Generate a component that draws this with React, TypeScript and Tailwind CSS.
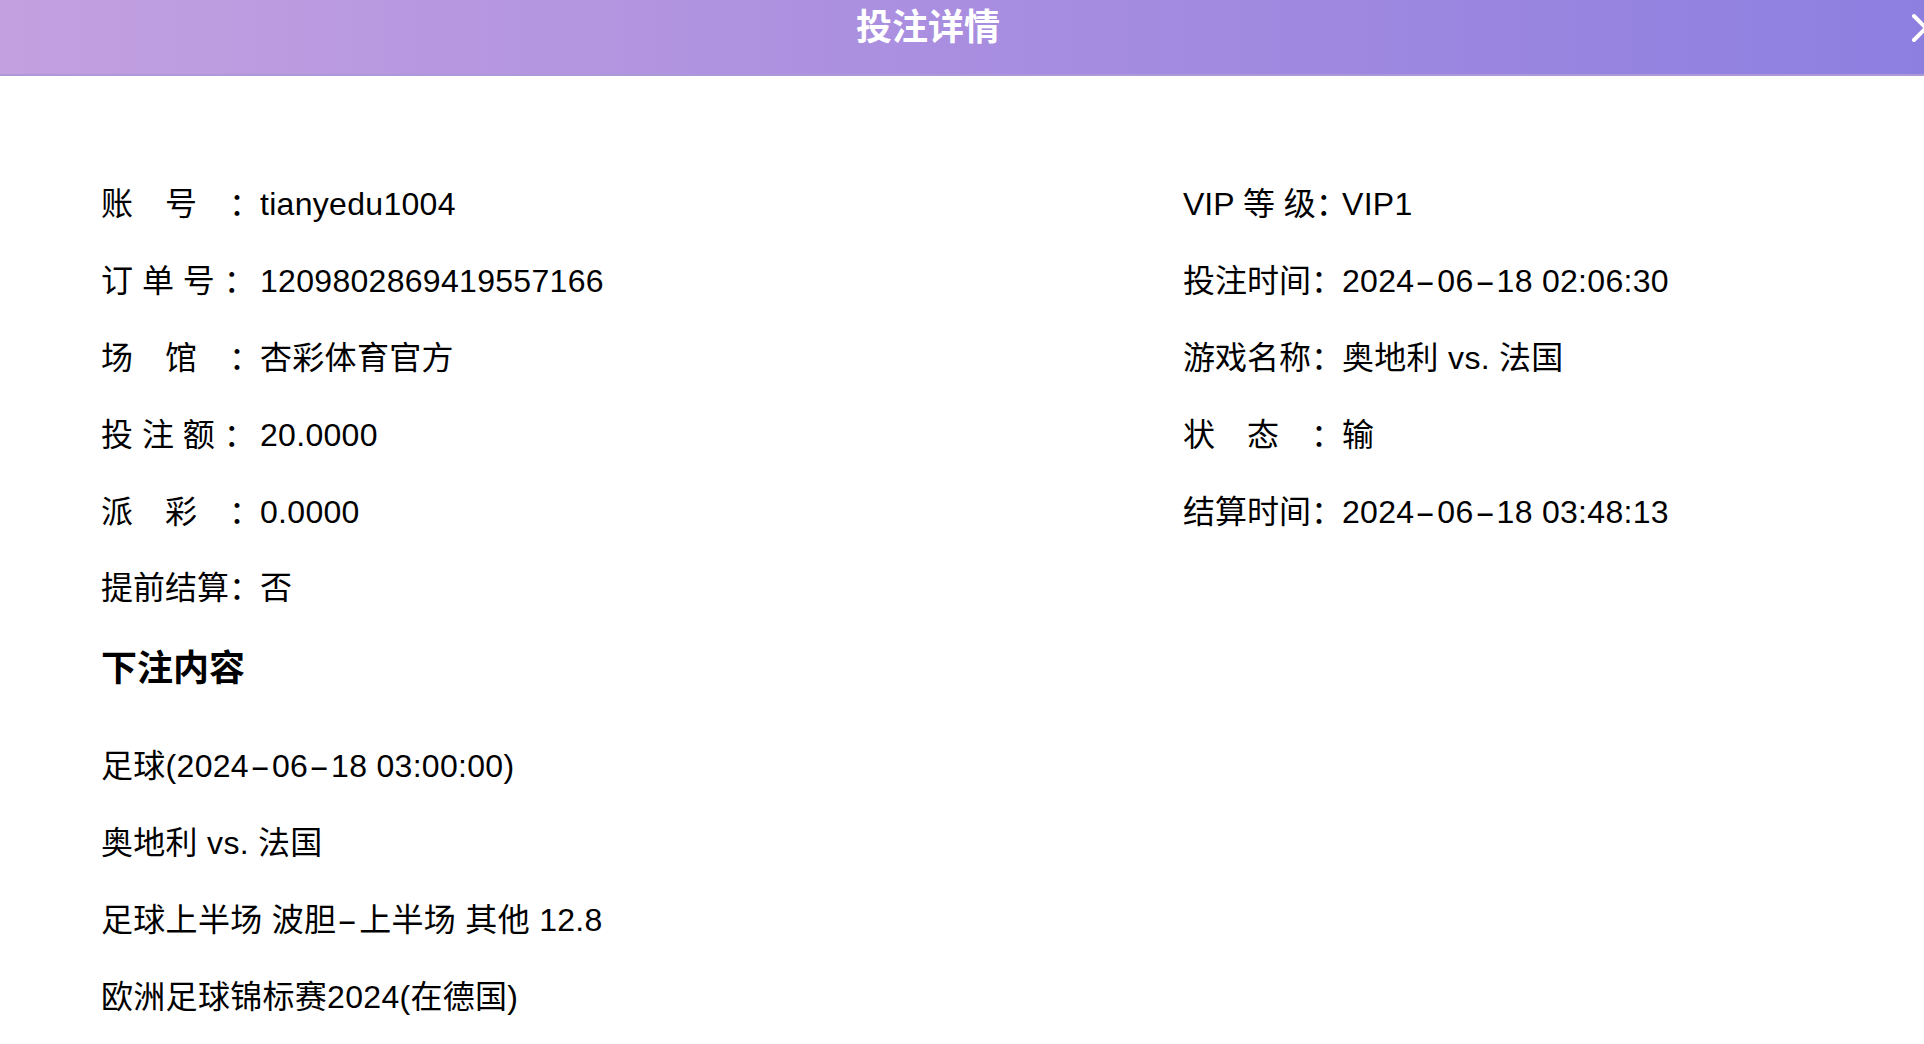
import React from "react";

const font = { fontFamily: '"Liberation Sans", "Noto Sans CJK SC", sans-serif' };

const left: [string, string][] = [
  ["账　号　：", "tianyedu1004"],
  ["订 单 号 ：", "1209802869419557166"],
  ["场　馆　：", "杏彩体育官方"],
  ["投 注 额 ：", "20.0000"],
  ["派　彩　：", "0.0000"],
  ["提前结算：", "否"],
];

const right: [string, string][] = [
  ["VIP 等 级：", "VIP1"],
  ["投注时间：", "2024-06-18 02:06:30"],
  ["游戏名称：", "奥地利 vs. 法国"],
  ["状　态　：", "输"],
  ["结算时间：", "2024-06-18 03:48:13"],
];

const content = [
  "足球(2024-06-18 03:00:00)",
  "奥地利 vs. 法国",
  "足球上半场 波胆-上半场 其他 12.8",
  "欧洲足球锦标赛2024(在德国)",
];

function Txt({ text }: { text: string }) {
  const parts = text.split("-");
  return (
    <>
      {parts.map((p, i) => (
        <React.Fragment key={i}>
          {i > 0 && <span className="mx-[6px] inline-block scale-x-[1.9]">-</span>}
          {p}
        </React.Fragment>
      ))}
    </>
  );
}

function Row({ label, value }: { label: string; value: string }) {
  return (
    <div className="flex h-[76.8px] items-center text-[32px] text-black">
      <span className="w-[159px] whitespace-pre">{label}</span>
      <span className="whitespace-pre tracking-[0.3px]">
        <Txt text={value} />
      </span>
    </div>
  );
}

export default function App() {
  return (
    <div className="min-h-screen w-full bg-white" style={font}>
      <div className="relative flex h-[76px] w-full justify-center overflow-hidden border-b-2 border-[#ad98d8] bg-gradient-to-r from-[#c3a0e0] via-[#a98ee0] to-[#8d7fe0] pr-[68px] pt-[9px]">
        <span className="text-[36px] font-bold leading-[38px] text-white">投注详情</span>
        <svg
          className="absolute left-[1911px] top-[13px]"
          width="30"
          height="30"
          viewBox="0 0 30 30"
          fill="none"
          stroke="white"
          strokeWidth="4"
          strokeLinecap="round"
        >
          <path d="M3 3 L27 27 M27 3 L3 27" />
        </svg>
      </div>
      <div className="pl-[101px] pt-[90px]">
        <div className="flex">
          <div className="w-[1082px]">
            {left.map(([l, v]) => (
              <Row key={l} label={l} value={v} />
            ))}
          </div>
          <div>
            {right.map(([l, v]) => (
              <Row key={l} label={l} value={v} />
            ))}
          </div>
        </div>
        <div className="flex h-[84px] items-center text-[36px] font-bold text-black">下注内容</div>
        <div className="mt-[17px]">
          {content.map((c) => (
            <div key={c} className="flex h-[77px] items-center whitespace-pre text-[32px] tracking-[0.3px] text-black">
              <Txt text={c} />
            </div>
          ))}
        </div>
      </div>
    </div>
  );
}
